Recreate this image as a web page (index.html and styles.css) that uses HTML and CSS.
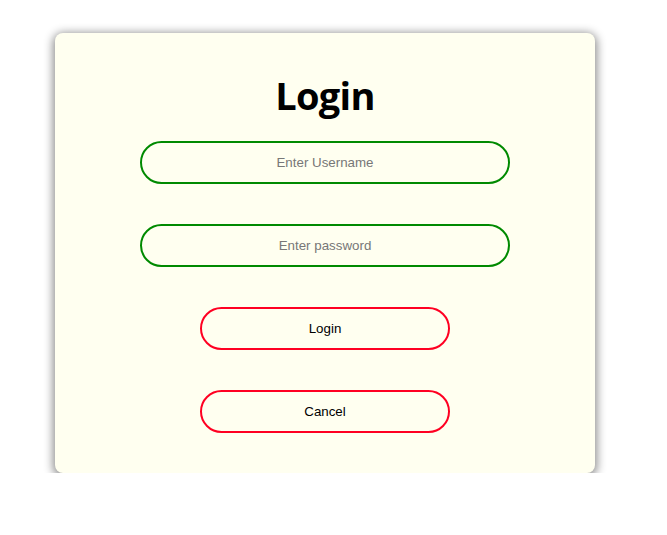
FILE: index.html
```html
<!DOCTYPE html>
<html>
<head>
<meta charset="utf-8">
<link rel="stylesheet" href="styles.css">
</head>
<body>
<div class="card">
  <h1 class="title">Login</h1>
  <div class="form">
    <input class="field" type="text" placeholder="Enter Username">
    <input class="field" type="password" placeholder="Enter password">
    <button class="btn">Login</button>
    <button class="btn">Cancel</button>
  </div>
</div>
</body>
</html>
```
FILE: styles.css
```css
html, body {
  margin: 0;
  padding: 0;
  background: #ffffff;
}
.card {
  box-sizing: border-box;
  margin: 33px 0 0 55px;
  width: 540px;
  height: 440px;
  background: #fffff0;
  border-radius: 8px;
  box-shadow: 0 2px 10px 2px rgba(0,0,0,0.45);
  display: flex;
  flex-direction: column;
  align-items: center;
  padding-top: 38px;
}
.title {
  margin: 0;
  font-family: "Open Sans", sans-serif;
  font-weight: 700;
  font-size: 38px;
  letter-spacing: -0.7px;
  line-height: 48px;
  color: #000;
}
.form {
  margin-top: 22px;
  display: flex;
  flex-direction: column;
  align-items: center;
  gap: 40px;
}
.field {
  box-sizing: border-box;
  width: 370px;
  height: 43px;
  border: 2px solid #008a00;
  border-radius: 22px;
  background: transparent;
  text-align: center;
  font-family: "Liberation Sans", Arial, sans-serif;
  font-size: 13.33px;
  outline: none;
}
.field::placeholder {
  color: #777;
}
.btn {
  box-sizing: border-box;
  width: 250px;
  height: 43px;
  border: 2px solid #ff0022;
  border-radius: 22px;
  background: transparent;
  font-family: "Liberation Sans", Arial, sans-serif;
  font-size: 13.33px;
  color: #000;
}
```
